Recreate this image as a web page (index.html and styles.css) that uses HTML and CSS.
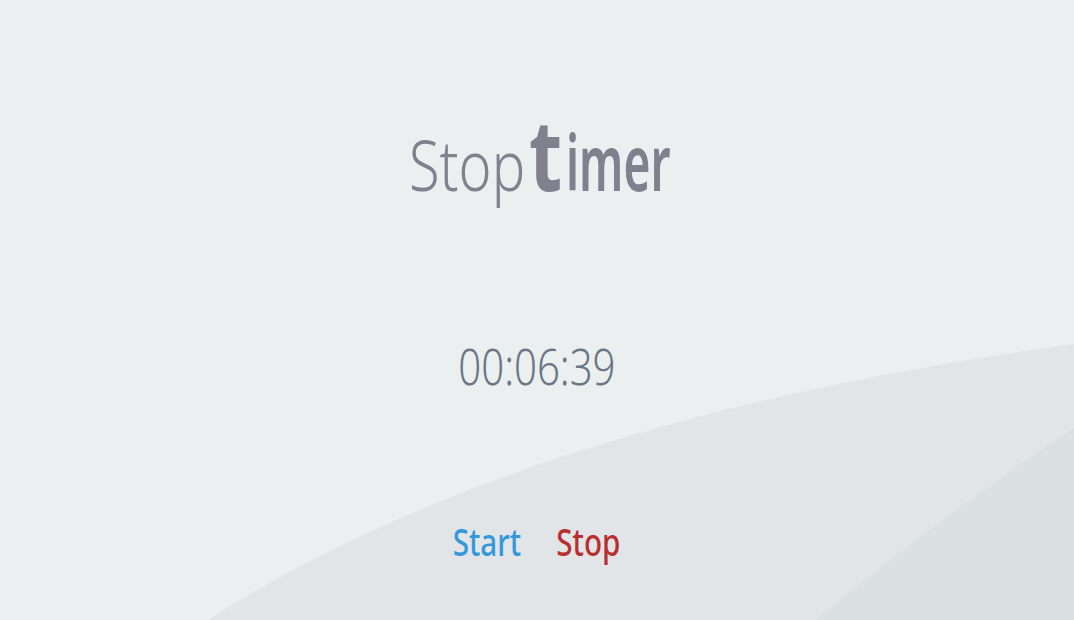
FILE: index.html
```html
<!DOCTYPE html>
<html>
<head>
<meta charset="utf-8">
<title>Stoptimer</title>
<link rel="stylesheet" href="styles.css">
</head>
<body>
<div class="bg">
  <svg width="1074" height="620" viewBox="0 0 1074 620" xmlns="http://www.w3.org/2000/svg">
    <path d="M208 620 Q520 420 1074 344 L1074 620 Z" fill="#e1e5e8"/>
    <path d="M815 620 Q950 510 1074 428 L1074 620 Z" fill="#dbe0e3"/>
  </svg>
</div>
<main class="page">
  <h1 class="title"><span class="light">Stop</span><span class="big">t</span><span class="bold">imer</span></h1>
  <div class="clock">00:06:39</div>
  <div class="actions">
    <button class="btn start">Start</button>
    <button class="btn stop">Stop</button>
  </div>
</main>
</body>
</html>
```
FILE: styles.css
```css
html, body {
  margin: 0;
  padding: 0;
  height: 100%;
}
body {
  background: #ebeff0;
  font-family: "Noto Sans", "DejaVu Sans", sans-serif;
  overflow: hidden;
  position: relative;
}
.bg {
  position: absolute;
  left: 0;
  top: 0;
  width: 1074px;
  height: 620px;
  z-index: 0;
}
.bg svg { display: block; }
.page {
  position: relative;
  z-index: 1;
  height: 620px;
  display: flex;
  flex-direction: column;
  align-items: center;
  box-sizing: border-box;
  padding-top: 103px;
}
.title {
  margin: 0;
  font-weight: normal;
  color: #80808f;
  line-height: 100px;
  white-space: nowrap;
  display: flex;
  align-items: baseline;
}
.title span {
  display: inline-block;
  flex: none;
  transform-origin: 0 50%;
}
.light {
  font-size: 70px;
  font-weight: 300;
  width: 114px;
  transform: scaleX(0.8);
}
.big {
  font-size: 98px;
  font-weight: 700;
  width: 37px;
  margin-left: 6px;
  transform: scaleX(0.78);
}
.bold {
  font-size: 77px;
  font-weight: 600;
  width: 100px;
  transform: scaleX(0.6);
}
.clock {
  margin-top: 128px;
  font-size: 49px;
  line-height: 49px;
  color: #6b7786;
  font-weight: 300;
  transform: scaleX(0.82);
}
.actions {
  margin-top: 130px;
  display: flex;
  gap: 45px;
  transform: scaleX(0.78);
}
.btn {
  background: none;
  border: 0;
  padding: 0;
  font-family: inherit;
  font-size: 38px;
  font-weight: 500;
  line-height: 40px;
  cursor: pointer;
}
.start { color: #3498db; }
.stop { color: #b92e2e; }
```
